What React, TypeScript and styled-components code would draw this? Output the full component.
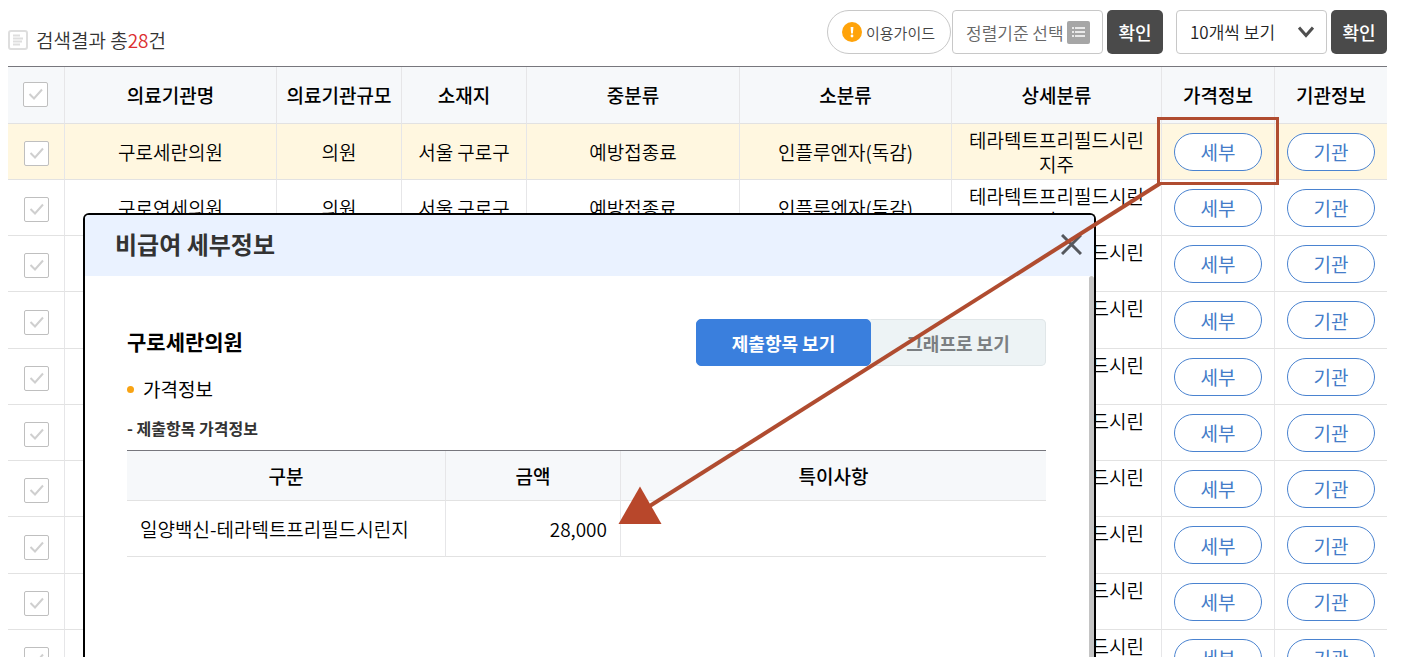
import React from "react";
import styled, { createGlobalStyle, css } from "styled-components";

const GlobalStyle = createGlobalStyle`
  * { box-sizing: border-box; }
  body {
    margin: 0;
    background: #fff;
    color: #000;
    font-family: "Noto Sans CJK KR", "Noto Sans", sans-serif;
    font-size: 19px;
    font-weight: 350;
    line-height: 24px;
  }
  button, select, input { font-family: inherit; font-weight: inherit; margin: 0; }
  h1, h2, h3, h4, p { margin: 0; }
`;

const Page = styled.div`
  position: relative;
  height: 100vh;
  overflow: hidden;
  padding: 10px 27px 0 8px;
`;

const Toolbar = styled.header`
  display: flex;
  justify-content: space-between;
  height: 56px;
`;

const ResultCount = styled.h1`
  display: flex;
  align-items: center;
  gap: 8px;
  padding-top: 4px;
  font-size: 19px;
  font-weight: 350;
  color: #333;
`;

const Count = styled.em`
  font-style: normal;
  color: #dc2f2f;
`;

const Controls = styled.div`
  display: flex;
  align-items: flex-start;
  gap: 4px;
`;

const ControlGroup = styled.div<{ $gap: number }>`
  display: flex;
  gap: ${(p) => p.$gap}px;
`;

const GroupPair = styled.div`
  display: flex;
  gap: 13px;
`;

const outlined = css`
  height: 44px;
  background: #fff;
  border: 1px solid #c8c8c8;
`;

const GuideButton = styled.button`
  ${outlined}
  width: 124px;
  display: flex;
  align-items: center;
  gap: 4px;
  padding: 0 0 0 14px;
  border-radius: 22px;
  font-size: 15px;
  color: #444;
  white-space: nowrap;
`;

const SortButton = styled.button`
  ${outlined}
  width: 151px;
  display: flex;
  align-items: center;
  justify-content: space-between;
  padding: 0 12px 0 13px;
  border-radius: 4px;
  font-size: 17px;
  color: #666;
  white-space: nowrap;
`;

const ConfirmButton = styled.button`
  width: 56px;
  height: 44px;
  padding: 0;
  border: 0;
  border-radius: 5px;
  background: #4a4a4a;
  color: #fff;
  font-size: 18px;
  font-weight: 500;
`;

const SelectBox = styled.label`
  display: grid;
  align-items: center;
  width: 151px;
  > * { grid-area: 1 / 1; }
  > svg { justify-self: end; margin-right: 13px; pointer-events: none; }
`;

const PageSizeSelect = styled.select`
  ${outlined}
  width: 100%;
  padding: 0 0 2px 13px;
  border-radius: 4px;
  appearance: none;
  font-size: 17px;
  color: #222;
`;

const ResultTable = styled.table`
  width: 100%;
  table-layout: fixed;
  border-collapse: separate;
  border-spacing: 0;
  border-top: 1px solid #77777d;
  text-align: center;
`;

const Cell = styled.td`
  padding: 0;
  border-bottom: 1px solid #e2e2e2;
  border-left: 1px solid #e6e6e8;
  &:first-child { border-left: 0; }
`;

const HeadCell = styled(Cell).attrs({ as: "th" })`
  height: 57px;
  background: #f6f8fa;
  font-weight: 500;
`;

const CheckHeadCell = styled(HeadCell)`
  padding: 0 2px 4px 0;
`;

const Row = styled.tr<{ $active?: boolean }>`
  height: 56px;
  background: ${(p) => (p.$active ? "#fff7e0" : "#fff")};
  &:nth-child(4n) { height: 57px; }
`;

const CheckLabel = styled.label<{ $low?: boolean }>`
  display: inline-grid;
  vertical-align: middle;
  margin-top: ${(p) => (p.$low ? 4 : 0)}px;
  > * { grid-area: 1 / 1; }
  > svg { pointer-events: none; }
`;

const CheckInput = styled.input`
  appearance: none;
  width: 25px;
  height: 25px;
  border: 1px solid #bfbfbf;
  border-radius: 2px;
  background: #fff;
`;

const PillButton = styled.button`
  display: block;
  width: 88px;
  height: 38px;
  margin: 0 auto;
  padding: 0;
  border: 1px solid #4a83d0;
  border-radius: 19px;
  background: #fff;
  color: #447cc8;
  font-size: 19px;
  font-weight: 400;
`;

const Dialog = styled.section`
  position: absolute;
  top: 213px;
  left: 83px;
  bottom: 0;
  width: 1013px;
  display: flex;
  flex-direction: column;
  overflow: hidden;
  background: #fff;
  border: 2px solid #000;
  border-bottom: 0;
  border-radius: 6px 6px 0 0;
`;

const DialogHeader = styled.header`
  flex: none;
  display: flex;
  align-items: center;
  justify-content: space-between;
  height: 61px;
  padding: 0 12px 3px 30px;
  background: #eaf2ff;
`;

const DialogTitle = styled.h2`
  font-size: 24px;
  font-weight: 700;
  color: #333;
`;

const CloseButton = styled.button`
  display: flex;
  padding: 0;
  border: 0;
  background: none;
`;

const DialogScroll = styled.div`
  flex: 1;
  display: flex;
`;

const DialogBody = styled.div`
  flex: 1;
  padding: 43px 43px 0 42px;
`;

const ScrollThumb = styled.div`
  width: 5px;
  border-radius: 3px 3px 0 0;
  background: #c4c4c4;
`;

const DetailHead = styled.div`
  display: flex;
  align-items: center;
  justify-content: space-between;
  height: 47px;
`;

const ClinicName = styled.h3`
  padding-bottom: 4px;
  font-size: 21px;
  font-weight: 700;
`;

const Tabs = styled.div`
  display: flex;
  width: 350px;
  border-radius: 5px;
  background: #edf3f5;
`;

const Tab = styled.button<{ $active?: boolean }>`
  width: 175px;
  height: 47px;
  padding: 0;
  border: 1px solid ${(p) => (p.$active ? "#3a7fdd" : "#e0e6e8")};
  border-left-width: ${(p) => (p.$active ? 1 : 0)}px;
  border-radius: ${(p) => (p.$active ? "5px" : "0 5px 5px 0")};
  background: ${(p) => (p.$active ? "#3a7fdd" : "#edf3f5")};
  color: ${(p) => (p.$active ? "#fff" : "#7b7f82")};
  font-size: 18px;
  font-weight: 700;
`;

const BulletTitle = styled.h4`
  display: flex;
  align-items: center;
  gap: 9px;
  margin-top: 11px;
  font-size: 19px;
  font-weight: 400;
  &::before {
    content: "";
    width: 7px;
    height: 7px;
    border-radius: 50%;
    background: #f8a313;
  }
`;

const SubTitle = styled.p`
  margin: 15px 0 10px;
  font-size: 16px;
  font-weight: 700;
  color: #333;
`;

const PriceTable = styled(ResultTable)``;

const PriceHead = styled(HeadCell)`
  height: 50px;
`;

const PriceCell = styled(Cell)<{ $align: "left" | "right" }>`
  height: 56px;
  padding: 0 13px;
  text-align: ${(p) => p.$align};
`;

const Annotation = styled.svg`
  position: absolute;
  top: 0;
  left: 0;
  pointer-events: none;
`;

const COLUMNS = [
  { name: "의료기관명", width: 212 },
  { name: "의료기관규모", width: 125 },
  { name: "소재지", width: 125 },
  { name: "중분류", width: 213 },
  { name: "소분류", width: 212 },
  { name: "상세분류", width: 210 },
  { name: "가격정보", width: 113 },
  { name: "기관정보", width: 113 },
];

const CLINICS = ["구로세란의원", "구로연세의원", "", "", "", "", "", "", "", ""];

function CheckBox({ label, low }: { label: string; low?: boolean }) {
  return (
    <CheckLabel $low={low}>
      <CheckInput type="checkbox" aria-label={label} />
      <svg width="25" height="25" viewBox="0 0 25 25" fill="none" stroke="#cfcfcf" strokeWidth="2">
        <path d="M6.500 12l4.500 4.500 8-9" />
      </svg>
    </CheckLabel>
  );
}

function ResultToolbar() {
  return (
    <Toolbar>
      <ResultCount>
        <svg width="20" height="20" viewBox="0 0 20 20" fill="none" stroke="#dedede" strokeWidth="2">
          <rect x="1" y="1" width="18" height="18" rx="2" />
          <path d="M5 5.500h7M5 8.500h10M5 11.500h9M5 14.500h7" strokeWidth="1.800" />
        </svg>
        <span>
          검색결과 총<Count>28</Count>건
        </span>
      </ResultCount>
      <Controls>
        <ControlGroup $gap={1}>
          <GuideButton type="button">
            <svg width="20" height="20" viewBox="0 0 20 20">
              <circle cx="10" cy="10" r="10" fill="#ffa30a" />
              <path d="M8.600 5h2.800l-.5 6.500H9.100z" fill="#fff" />
              <circle cx="10" cy="14" r="1.400" fill="#fff" />
            </svg>
            이용가이드
          </GuideButton>
          <SortButton type="button">
            정렬기준 선택
            <svg width="23" height="23" viewBox="0 0 23 23">
              <rect width="23" height="23" rx="2" fill="#a6a6a6" />
              <path
                d="M5 7h2M5 11h2M5 15h2M8 7h10M8 11h10M8 15h10"
                stroke="#fff"
                strokeWidth="1.600"
              />
            </svg>
          </SortButton>
        </ControlGroup>
        <GroupPair>
          <ConfirmButton type="button">확인</ConfirmButton>
          <ControlGroup $gap={4}>
            <SelectBox>
              <PageSizeSelect aria-label="목록 개수" defaultValue="10">
                <option value="10">10개씩 보기</option>
              </PageSizeSelect>
              <svg width="16" height="12" viewBox="0 0 16 12" fill="none" stroke="#4f4f4f" strokeWidth="3">
                <path d="M1 1.500L8 9.500l7-8" />
              </svg>
            </SelectBox>
            <ConfirmButton type="button">확인</ConfirmButton>
          </ControlGroup>
        </GroupPair>
      </Controls>
    </Toolbar>
  );
}

function Results() {
  return (
    <ResultTable>
      <colgroup>
        <col style={{ width: 56 }} />
        {COLUMNS.map((c) => (
          <col key={c.name} style={{ width: c.width }} />
        ))}
      </colgroup>
      <thead>
        <tr>
          <CheckHeadCell>
            <CheckBox label="전체 선택" />
          </CheckHeadCell>
          {COLUMNS.map((c) => (
            <HeadCell key={c.name}>{c.name}</HeadCell>
          ))}
        </tr>
      </thead>
      <tbody>
        {CLINICS.map((name, i) => (
          <Row key={i} $active={i === 0}>
            <Cell>
              <CheckBox label={`${i + 1}번 선택`} low />
            </Cell>
            <Cell>{name}</Cell>
            <Cell>{name && "의원"}</Cell>
            <Cell>{name && "서울 구로구"}</Cell>
            <Cell>{name && "예방접종료"}</Cell>
            <Cell>{name && "인플루엔자(독감)"}</Cell>
            <Cell>
              테라텍트프리필드시린
              <br />
              지주
            </Cell>
            <Cell>
              <PillButton type="button">세부</PillButton>
            </Cell>
            <Cell>
              <PillButton type="button">기관</PillButton>
            </Cell>
          </Row>
        ))}
      </tbody>
    </ResultTable>
  );
}

function DetailDialog() {
  return (
    <Dialog role="dialog" aria-labelledby="detail-title">
      <DialogHeader>
        <DialogTitle id="detail-title">비급여 세부정보</DialogTitle>
        <CloseButton type="button" aria-label="닫기">
          <svg width="21" height="21" viewBox="0 0 21 21" fill="none" stroke="#55585e" strokeWidth="3">
            <path d="M1 1l19 19M20 1L1 20" />
          </svg>
        </CloseButton>
      </DialogHeader>
      <DialogScroll>
        <DialogBody>
          <DetailHead>
            <ClinicName>구로세란의원</ClinicName>
            <Tabs role="tablist">
              <Tab type="button" role="tab" aria-selected="true" $active>
                제출항목 보기
              </Tab>
              <Tab type="button" role="tab" aria-selected="false">
                그래프로 보기
              </Tab>
            </Tabs>
          </DetailHead>
          <BulletTitle>가격정보</BulletTitle>
          <SubTitle>- 제출항목 가격정보</SubTitle>
          <PriceTable>
            <colgroup>
              <col style={{ width: 318 }} />
              <col style={{ width: 175 }} />
              <col style={{ width: 426 }} />
            </colgroup>
            <thead>
              <tr>
                <PriceHead>구분</PriceHead>
                <PriceHead>금액</PriceHead>
                <PriceHead>특이사항</PriceHead>
              </tr>
            </thead>
            <tbody>
              <tr>
                <PriceCell $align="left">일양백신-테라텍트프리필드시린지</PriceCell>
                <PriceCell $align="right">28,000</PriceCell>
                <PriceCell $align="left" />
              </tr>
            </tbody>
          </PriceTable>
        </DialogBody>
        <ScrollThumb />
      </DialogScroll>
    </Dialog>
  );
}

export default function App() {
  return (
    <Page>
      <GlobalStyle />
      <ResultToolbar />
      <Results />
      <DetailDialog />
      <Annotation width="1414" height="657" viewBox="0 0 1414 657" fill="none" aria-hidden="true">
        <rect x="1158.500" y="118.500" width="119" height="65" stroke="#b04c30" strokeWidth="3" />
        <path d="M1160 183.500L645 509" stroke="#b04c30" strokeWidth="4" />
        <path d="M640 486.500L661.500 524h-43z" fill="#b8472b" />
      </Annotation>
    </Page>
  );
}
